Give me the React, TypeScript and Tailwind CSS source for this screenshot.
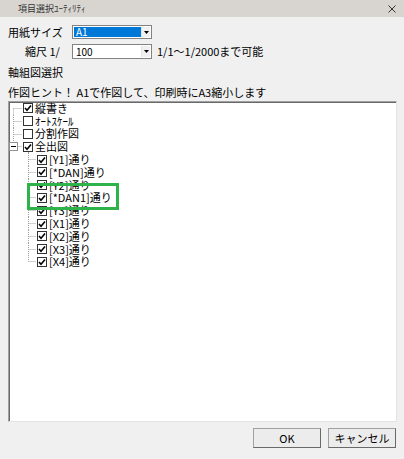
import React from "react";

interface TreeItem {
  label: string;
  level: 0 | 1;
  checked: boolean;
  first?: boolean;
  last?: boolean;
  expander?: boolean;
}

const items: TreeItem[] = [
  { label: "縦書き", level: 0, checked: true, first: true },
  { label: "ｵｰﾄｽｹｰﾙ", level: 0, checked: false },
  { label: "分割作図", level: 0, checked: false },
  { label: "全出図", level: 0, checked: true, last: true, expander: true },
  { label: "[Y1]通り", level: 1, checked: true, first: true },
  { label: "[*DAN]通り", level: 1, checked: true },
  { label: "[Y2]通り", level: 1, checked: true },
  { label: "[*DAN1]通り", level: 1, checked: true },
  { label: "[Y3]通り", level: 1, checked: true },
  { label: "[X1]通り", level: 1, checked: true },
  { label: "[X2]通り", level: 1, checked: true },
  { label: "[X3]通り", level: 1, checked: true },
  { label: "[X4]通り", level: 1, checked: true, last: true },
];

function DropArrow() {
  return (
    <div className="w-[9px] h-full bg-[#f0f0f0] border-l border-[#e3e3e3] flex items-center justify-center">
      <svg width="5" height="3" viewBox="0 0 5 3">
        <path d="M0 0 H5 L2.5 3 Z" fill="#000" />
      </svg>
    </div>
  );
}

function Gutter({ item }: { item: TreeItem }) {
  const w = item.level === 0 ? 14 : 28;
  const vx = item.level === 0 ? 4.5 : 19.5;
  const hx2 = item.level === 0 ? 13 : 27;
  const y1 = item.first && item.level === 0 ? 6.5 : 0;
  const y2 = item.last ? 6.5 : 13;
  return (
    <svg width={w} height="13" viewBox={`0 0 ${w} 13`} className="shrink-0 overflow-visible">
      <g stroke="#a0a0a0" strokeWidth="1" strokeDasharray="1 1">
        <line x1={vx} y1={y1} x2={vx} y2={y2} />
        <line x1={vx} y1="6.5" x2={hx2} y2="6.5" />
      </g>
      {item.expander && (
        <g>
          <rect x="0.5" y="2.5" width="8" height="8" fill="#fff" stroke="#919191" />
          <line x1="2" y1="6.5" x2="7" y2="6.5" stroke="#000" />
          <line x1="19.5" y1="12" x2="19.5" y2="13" stroke="#a0a0a0" />
        </g>
      )}
    </svg>
  );
}

function CheckBox({ checked }: { checked: boolean }) {
  return (
    <svg width="10" height="10" viewBox="0 0 10 10" className="shrink-0">
      <rect x="0.5" y="0.5" width="9" height="9" fill="#fff" stroke="#333" />
      {checked && <path d="M2 5 L4 7.2 L8 2.6" fill="none" stroke="#000" strokeWidth="1.6" />}
    </svg>
  );
}

export default function App() {
  return (
    <div className="w-[404px] h-[459px] bg-[#f0f0f0] flex flex-col text-[11px] leading-none text-black font-['Noto_Sans_CJK_JP',sans-serif]">
      <div className="h-[17px] shrink-0 bg-[#d8d4d0] flex items-center pl-[18px] pr-[8px]">
        <span className="text-[9px] text-[#333]">項目選択ﾕｰﾃｨﾘﾃｨ</span>
        <svg width="8" height="8" viewBox="0 0 8 8" className="ml-auto">
          <path d="M0.5 0.5 L7.5 7.5 M7.5 0.5 L0.5 7.5" stroke="#333" strokeWidth="1" />
        </svg>
      </div>

      <div className="mt-[8px] h-[14px] flex items-center pl-[8px]">
        <span className="w-[64px]">用紙サイズ</span>
        <div className="w-[80px] h-[14px] border border-[#828282] bg-white flex p-[1px]">
          <div className="flex-1 bg-[#0078d7] text-white flex items-center pl-[2px] text-[10px]">A1</div>
          <DropArrow />
        </div>
      </div>

      <div className="mt-[5px] h-[15px] flex items-center pl-[8px]">
        <span className="w-[64px] pl-[17px] whitespace-pre">縮尺 1/</span>
        <div className="w-[80px] h-[15px] border border-[#828282] bg-white flex p-[1px]">
          <div className="flex-1 flex items-center pl-[2px] text-[10px]">100</div>
          <DropArrow />
        </div>
        <span className="ml-[5px]">1/1～1/2000まで可能</span>
      </div>

      <div className="mt-[6px] h-[14px] flex items-center pl-[8px]">軸組図選択</div>
      <div className="mt-[6px] h-[14px] flex items-center pl-[8px] whitespace-pre">
        作図ヒント！ A1で作図して、印刷時にA3縮小します
      </div>

      <div className="relative mt-[2px] ml-[8px] w-[389px] h-[321px] bg-white border border-t-[#a0a0a0] border-l-[#a0a0a0] border-r-[#e3e3e3] border-b-[#e3e3e3] shadow-[inset_1px_1px_0_#696969]">
        <div className="flex flex-col">
          {items.map((item) => (
            <div key={item.label} className="h-[12.8px] flex items-center">
              <Gutter item={item} />
              <CheckBox checked={item.checked} />
              <span className="ml-[2px]">{item.label}</span>
            </div>
          ))}
        </div>
        <div className="absolute left-[18px] top-[81px] w-[92px] h-[27px] border-[3px] border-[#2db34a]" />
      </div>

      <div className="mt-[6px] h-[20px] flex justify-end gap-[7px] pr-[8px]">
        <button className="w-[68px] h-[20px] bg-[#ececec] border border-[#a0a0a0] border-r-[#696969] border-b-[#696969] text-[11px]">
          OK
        </button>
        <button className="w-[68px] h-[20px] bg-[#ececec] border border-[#a0a0a0] border-r-[#696969] border-b-[#696969] text-[11px]">
          キャンセル
        </button>
      </div>
    </div>
  );
}
